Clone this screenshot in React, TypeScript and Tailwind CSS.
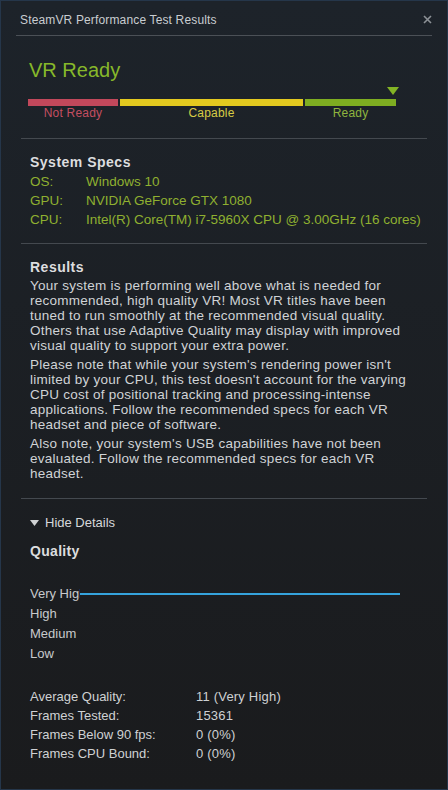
import React from "react";

const specs = [
  { label: "OS:", value: "Windows 10" },
  { label: "GPU:", value: "NVIDIA GeForce GTX 1080" },
  { label: "CPU:", value: "Intel(R) Core(TM) i7-5960X CPU @ 3.00GHz (16 cores)" },
];

const paragraphs = [
  [
    "Your system is performing well above what is needed for",
    "recommended, high quality VR! Most VR titles have been",
    "tuned to run smoothly at the recommended visual quality.",
    "Others that use Adaptive Quality may display with improved",
    "visual quality to support your extra power.",
  ],
  [
    "Please note that while your system's rendering power isn't",
    "limited by your CPU, this test doesn't account for the varying",
    "CPU cost of positional tracking and processing-intense",
    "applications. Follow the recommended specs for each VR",
    "headset and piece of software.",
  ],
  [
    "Also note, your system's USB capabilities have not been",
    "evaluated. Follow the recommended specs for each VR",
    "headset.",
  ],
];

const stats = [
  { label: "Average Quality:", value: "11 (Very High)" },
  { label: "Frames Tested:", value: "15361" },
  { label: "Frames Below 90 fps:", value: "0 (0%)" },
  { label: "Frames CPU Bound:", value: "0 (0%)" },
];

const Divider = () => <div className="mx-5 h-px bg-[#44494f]" />;

export default function App() {
  return (
    <div
      className="w-[448px] h-[790px] overflow-hidden border border-[#25364a] bg-gradient-to-b from-[#1d232a] to-[#1a1b1d] text-[13px] text-[#d0d3d6]"
      style={{ fontFamily: '"Liberation Sans", Arial, sans-serif' }}
    >
      {/* title bar */}
      <div className="h-[34px] flex items-center justify-between pl-[19px] pr-[14px] pt-[3px]">
        <span className="text-[12px] tracking-[0.15px] text-[#c9cdd1]">SteamVR Performance Test Results</span>
        <svg width="9" height="9" viewBox="0 0 9 9" className="mr-[1px]">
          <path d="M1 1 L8 8 M8 1 L1 8" stroke="#8c9196" strokeWidth="1.6" />
        </svg>
      </div>
      <div className="mx-[15px] h-px bg-[#4b5056]" />

      {/* readiness */}
      <div className="h-[102px] px-[27px] pt-[22px]">
        <div className="text-[20px] leading-6 text-[#87b82a] pl-[1px]">VR Ready</div>
        <div className="mt-[5px] h-2 flex justify-end pr-[21px]">
          <svg width="12" height="8" viewBox="0 0 12 8">
            <path d="M0 0 H12 L6 8 Z" fill="#83b425" />
          </svg>
        </div>
        <div className="mt-1 flex gap-[2px] w-[368px]">
          <div className="w-[90px]">
            <div className="h-[7px] bg-[#c2485b]" />
            <div className="text-center text-[12px] tracking-[0.2px] leading-[14px] text-[#c44e61]">Not Ready</div>
          </div>
          <div className="w-[183px]">
            <div className="h-[7px] bg-[#e3c91f]" />
            <div className="text-center text-[12px] tracking-[0.2px] leading-[14px] text-[#d7cc45]">Capable</div>
          </div>
          <div className="w-[91px]">
            <div className="h-[7px] bg-[#7ead21]" />
            <div className="text-center text-[12px] tracking-[0.2px] leading-[14px] text-[#8fb53e]">Ready</div>
          </div>
        </div>
      </div>
      <Divider />

      {/* specs */}
      <div className="h-[104px] px-[29px] pt-[14px]">
        <div className="font-bold text-[14px] tracking-[0.5px] leading-[19px] text-[#dcdddf]">System Specs</div>
        {specs.map((s) => (
          <div key={s.label} className="flex whitespace-nowrap text-[13.5px] leading-[19px] text-[#8fb030]">
            <span className="w-[56px] shrink-0">{s.label}</span>
            <span>{s.value}</span>
          </div>
        ))}
      </div>
      <Divider />

      {/* results */}
      <div className="h-[254px] px-[29px] pt-[14px]">
        <div className="font-bold text-[14px] tracking-[0.5px] leading-[19px] text-[#dcdddf]">Results</div>
        <div className="flex flex-col gap-1 mt-px">
          {paragraphs.map((p, i) => (
            <p key={i} className="text-[13.5px] tracking-[0.25px] leading-[15px] whitespace-nowrap">
              {p.map((line) => (
                <span key={line} className="block">
                  {line}
                </span>
              ))}
            </p>
          ))}
        </div>
      </div>
      <Divider />

      {/* details */}
      <div className="px-[29px] pt-[14px]">
        <div className="flex items-center gap-[6px] leading-[19px] text-[#d6d8da]">
          <svg width="9" height="6" viewBox="0 0 9 6">
            <path d="M0 0 H9 L4.5 6 Z" fill="#d0d2d4" />
          </svg>
          <span>Hide Details</span>
        </div>
        <div className="mt-[10px] font-bold text-[14px] tracking-[0.3px] leading-[19px] text-[#dcdddf]">Quality</div>

        <div className="mt-[23px] text-[#c8cacc]">
          <div className="flex items-center h-5">
            <span className="w-[50px] overflow-hidden whitespace-nowrap">Very High</span>
            <div className="h-[2px] w-[320px] bg-[#35a3dc]" />
          </div>
          <div className="h-5 leading-5">High</div>
          <div className="h-5 leading-5">Medium</div>
          <div className="h-5 leading-5">Low</div>
        </div>

        <div className="mt-[23px] text-[#cfd1d3]">
          {stats.map((s) => (
            <div key={s.label} className="flex leading-[19px]">
              <span className="w-[166px]">{s.label}</span>
              <span className="tracking-[0.2px]">{s.value}</span>
            </div>
          ))}
        </div>
      </div>
    </div>
  );
}
